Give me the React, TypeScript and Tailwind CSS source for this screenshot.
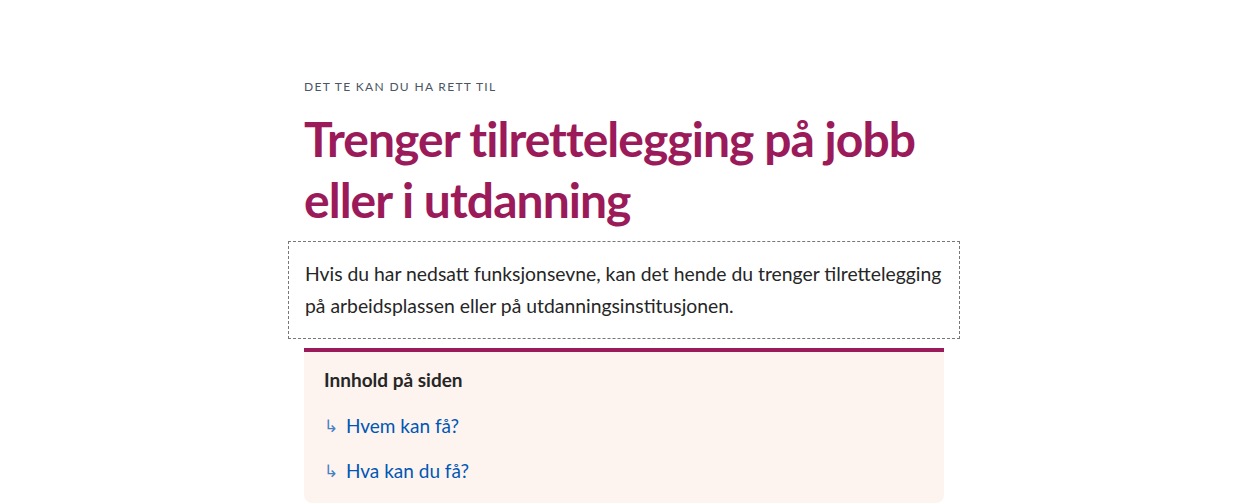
const links = ['Hvem kan få?', 'Hva kan du få?'];

const App = () => {
  return (
    <div className="min-h-[504px] bg-white font-['Lato',sans-serif] text-[#262626]">
      <div className="mx-auto w-[640px] pt-[79px]">
        <p className="text-[12px] leading-[16px] tracking-[0.11em] uppercase text-[#4a5566]">
          Det te kan du ha rett til
        </p>
        <h1 className="mt-[13px] text-[48px] leading-[61px] font-bold tracking-[-0.02em] text-[#9b1a5a]">
          Trenger tilrettelegging på jobb eller i utdanning
        </h1>
        <div className="mt-[11px] -mx-4 border border-dashed border-[#777] px-4 py-4">
          <p className="text-[19.35px] leading-[32px]">
            Hvis du har nedsatt funksjonsevne, kan det hende du trenger tilrettelegging på arbeidsplassen eller på
            utdanningsinstitusjonen.
          </p>
        </div>
        <nav className="mt-[9px] rounded-b-lg border-t-4 border-[#9b1a5a] bg-[#fdf4ef] px-5 pt-[14px] pb-[18px]">
          <h2 className="text-[19px] leading-[28px] font-bold">Innhold på siden</h2>
          <ul className="mt-[18px] flex flex-col gap-[17px]">
            {links.map(l => (
              <li key={l} className="flex items-center gap-[8px]">
                <span className="w-[14px] text-[17px] leading-[28px] text-[#4a7fc0]">↳</span>
                <a href="#" className="text-[19px] leading-[28px] text-[#0056b4]">
                  {l}
                </a>
              </li>
            ))}
          </ul>
        </nav>
      </div>
    </div>
  );
};

export default App;
